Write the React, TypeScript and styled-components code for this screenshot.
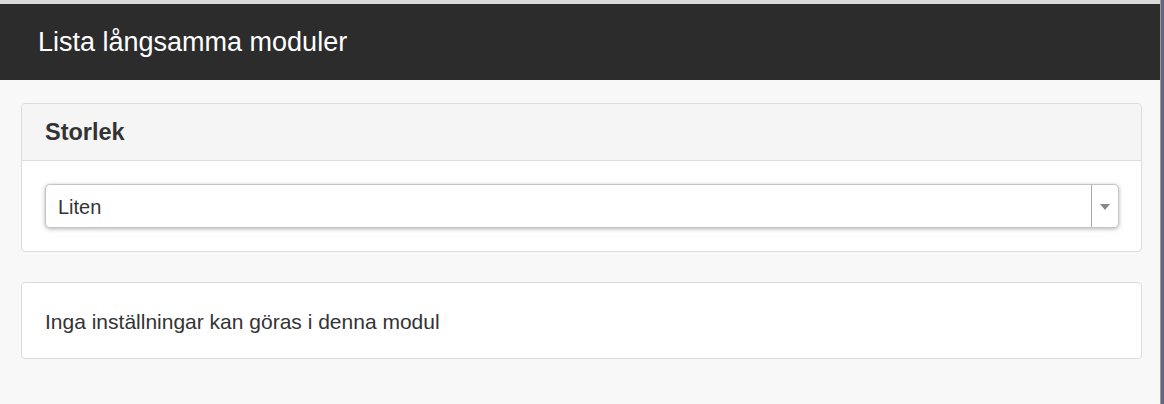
import { FC } from 'react';
import styled, { createGlobalStyle } from 'styled-components';

const GlobalStyle = createGlobalStyle`
  html, body {
    margin: 0;
    padding: 0;
    background: #f8f8f8;
  }
  body {
    font-family: 'Liberation Sans', Helvetica, Arial, sans-serif;
    color: #333;
  }
`;

interface SizeSelectProps {
  value: string;
}

const SizeSelect: FC<SizeSelectProps> = ({ value }) => {
  return (
    <SelectBox>
      <SelectValue>{value}</SelectValue>
      <SelectArrow>
        <svg width='10' height='6' viewBox='0 0 10 6'>
          <polygon points='0,0 10,0 5,6' fill='#888' />
        </svg>
      </SelectArrow>
    </SelectBox>
  );
};

const App: FC = () => {
  return (
    <>
      <GlobalStyle />
      <Page>
        <Main>
          <TopBar>
            <PageTitle>Lista långsamma moduler</PageTitle>
          </TopBar>
          <Content>
            <Panel>
              <PanelHeading>Storlek</PanelHeading>
              <PanelBody>
                <SizeSelect value='Liten' />
              </PanelBody>
            </Panel>
            <Panel>
              <PanelText>Inga inställningar kan göras i denna modul</PanelText>
            </Panel>
          </Content>
        </Main>
        <EdgeStrip />
      </Page>
    </>
  );
};

export default App;

const Page = styled.div`
  display: flex;
  width: 1164px;
  height: 404px;
  overflow: hidden;
`;

const Main = styled.div`
  flex: 1;
  display: flex;
  flex-direction: column;
  border-top: 4px solid #dadada;
  background: #f8f8f8;
`;

const EdgeStrip = styled.div`
  width: 3px;
  flex-shrink: 0;
  background: #66667c;
  border-left: 1px solid #9a9aa6;
`;

const TopBar = styled.header`
  display: flex;
  align-items: center;
  height: 76px;
  padding: 0 38px;
  background: #2c2c2c;
`;

const PageTitle = styled.h1`
  margin: 0;
  font-size: 27px;
  font-weight: 400;
  color: #fff;
`;

const Content = styled.div`
  display: flex;
  flex-direction: column;
  gap: 30px;
  padding: 23px 18px 0 21px;
`;

const Panel = styled.section`
  background: #fff;
  border: 1px solid #dcdcdc;
  border-radius: 4px;
`;

const PanelHeading = styled.h3`
  display: flex;
  align-items: center;
  height: 56px;
  margin: 0;
  padding: 0 23px;
  background: #f5f5f5;
  border-bottom: 1px solid #dcdcdc;
  border-radius: 4px 4px 0 0;
  font-size: 23.5px;
  font-weight: 700;
  color: #333;
`;

const PanelBody = styled.div`
  padding: 23px 22px 23px 23px;
`;

const PanelText = styled.p`
  display: flex;
  align-items: center;
  height: 75px;
  margin: 0;
  padding: 3px 23px 0;
  box-sizing: border-box;
  font-size: 21px;
`;

const SelectBox = styled.div`
  display: flex;
  align-items: stretch;
  height: 44px;
  box-sizing: border-box;
  border: 1px solid #c4c4c4;
  border-radius: 5px;
  background: #fff;
  box-shadow: 0 1px 4px rgba(0, 0, 0, 0.3);
`;

const SelectValue = styled.span`
  flex: 1;
  display: flex;
  align-items: center;
  padding: 3px 12px 0;
  font-size: 20px;
  color: #333;
`;

const SelectArrow = styled.span`
  display: flex;
  align-items: center;
  justify-content: center;
  width: 26px;
  border-left: 1px solid #aaa;
  padding-top: 1px;
`;
